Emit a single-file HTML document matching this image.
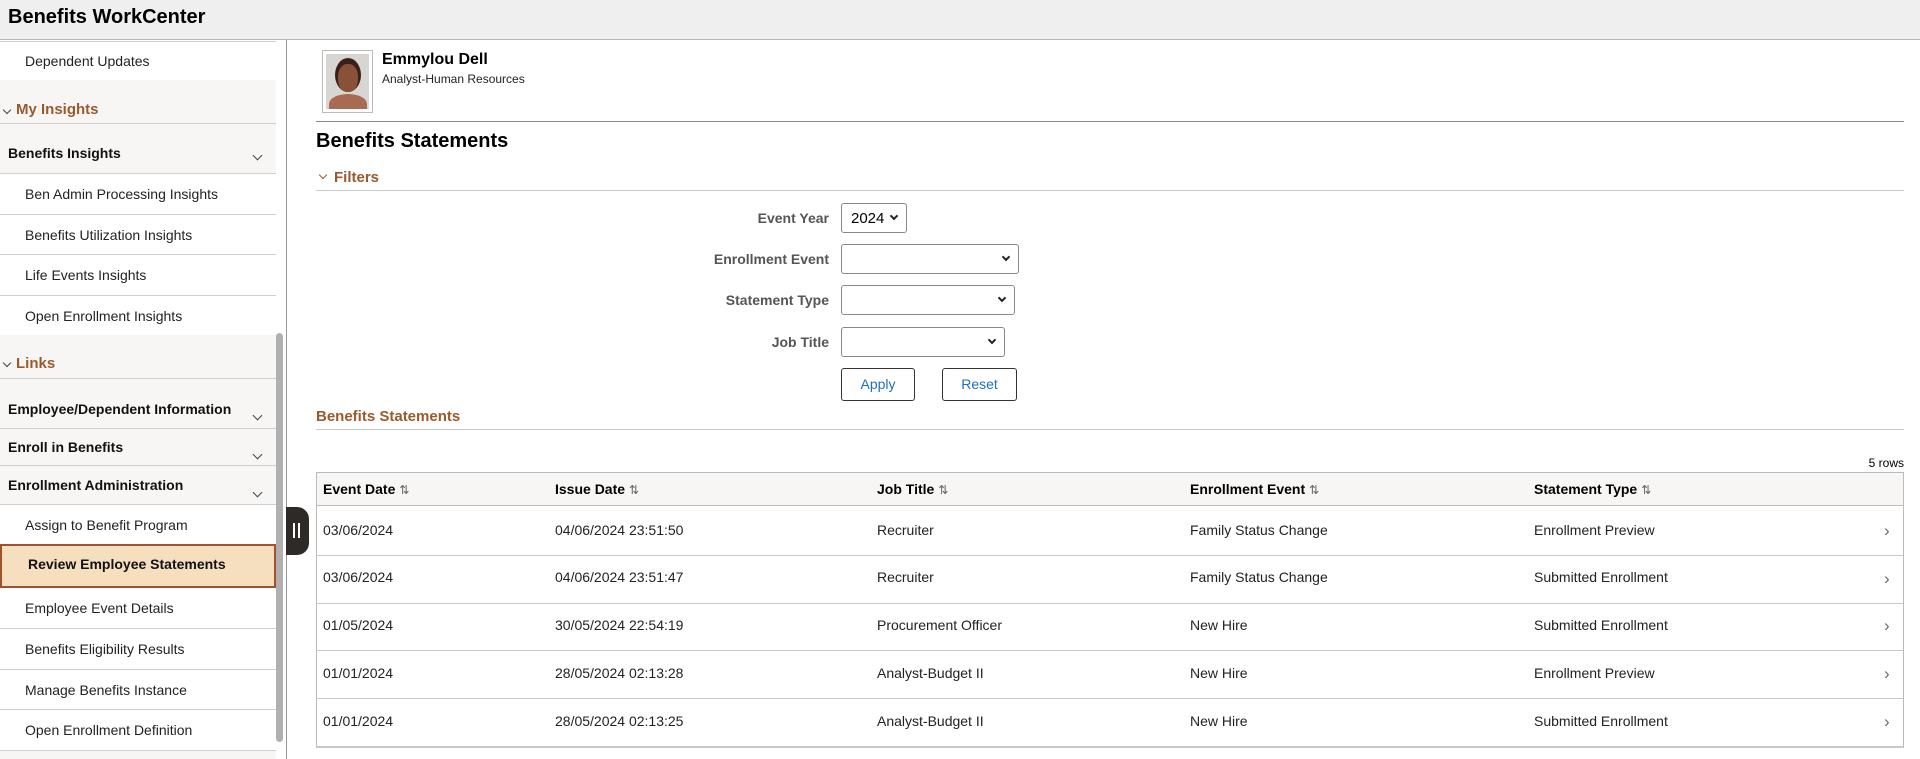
<!DOCTYPE html>
<html><head><meta charset="utf-8"><style>
*{box-sizing:border-box;margin:0;padding:0}
body{width:1920px;height:759px;overflow:hidden;background:#fff;font-family:"Liberation Sans",Arial,sans-serif;color:#000;position:relative}
.a{position:absolute}
.hdr{left:0;top:0;width:1920px;height:40px;background:#efefef;border-bottom:1px solid #b5b5b5}
.hdr span{position:absolute;left:8px;top:6px;font-size:20px;font-weight:bold;color:#000}
.nav{left:0;top:41px;width:276px;height:718px;background:#f7f6f5}
.row{position:absolute;left:0;width:276px;border-bottom:1px solid #cfcfcf;font-size:14px;display:flex;align-items:center}
.item{background:#fff;padding-left:25px;color:#222}
.grp{padding-left:8px;font-weight:bold;color:#111}
.sec{padding-left:16px;font-weight:bold;font-size:15px;color:#9a5a2e;border-bottom:1px solid #cfcfcf}
.chev{position:absolute;width:7px;height:7px;border-right:1.3px solid #444;border-bottom:1.3px solid #444;transform:rotate(45deg)}
.lbl{position:absolute;font-size:14px;font-weight:bold;color:#555;text-align:right;width:200px}
.sel{position:absolute;height:30px;border:1px solid #888;border-radius:3px;background:#fff;font-size:15px}
.sel i{position:absolute;right:9px;top:9px;width:6px;height:6px;border-right:2px solid #222;border-bottom:2px solid #222;transform:rotate(45deg)}
.btn{position:absolute;height:33px;border:1px solid #333;border-radius:3px;font-size:14px;color:#1f6fbf;text-align:center;line-height:31px}
.th{position:absolute;font-size:14px;font-weight:bold}
.td{position:absolute;font-size:14px;color:#222}
.hl{position:absolute;height:1px;background:#c8c8c8}
.srt{font-weight:normal;color:#666;font-size:12px;margin-left:4px}
</style></head><body>
<div class="a hdr"><span>Benefits WorkCenter</span></div>
<div class="a nav"></div>
<div class="a" style="left:286px;top:40px;width:1px;height:719px;background:#999"></div>
<div class="a" style="left:0;top:41px;width:276px;height:1px;background:#cfcfcf"></div>
<div class="row item" style="top:42px;height:38px;border-bottom:none">Dependent Updates</div>
<div class="row sec" style="top:80px;height:44px;padding-top:16px"><span class="chev" style="left:4px;top:27px;width:6px;height:6px"></span>My Insights</div>
<div class="row grp" style="top:124px;height:50px;padding-top:8px">Benefits Insights<span class="chev" style="left:254px;top:28px"></span></div>
<div class="row item" style="top:174px;height:41px;padding-top:0">Ben Admin Processing Insights</div>
<div class="row item" style="top:215px;height:40px">Benefits Utilization Insights</div>
<div class="row item" style="top:255px;height:41px">Life Events Insights</div>
<div class="row item" style="top:296px;height:39px;border-bottom:none">Open Enrollment Insights</div>
<div class="row sec" style="top:335px;height:44px;padding-top:14px"><span class="chev" style="left:4px;top:25px;width:6px;height:6px"></span>Links</div>
<div class="row grp" style="top:379px;height:50px;padding-top:10px">Employee/Dependent Information<span class="chev" style="left:254px;top:33px"></span></div>
<div class="row grp" style="top:429px;height:37px;padding-top:0">Enroll in Benefits<span class="chev" style="left:254px;top:22px"></span></div>
<div class="row grp" style="top:466px;height:39px">Enrollment Administration<span class="chev" style="left:254px;top:23px"></span></div>
<div class="row item" style="top:505px;height:39px;border-bottom:none">Assign to Benefit Program</div>
<div class="a" style="left:0;top:544px;width:276px;height:44px;background:#f5dfbf;border:2px solid #a0522d;font-size:14px;font-weight:bold;padding:10px 0 0 26px;color:#111">Review Employee Statements</div>
<div class="row item" style="top:588px;height:41px">Employee Event Details</div>
<div class="row item" style="top:629px;height:41px">Benefits Eligibility Results</div>
<div class="row item" style="top:670px;height:40px">Manage Benefits Instance</div>
<div class="row item" style="top:710px;height:41px">Open Enrollment Definition</div>
<div class="a" style="left:276px;top:333px;width:7px;height:409px;background:#b0b0b0;border-radius:4px"></div>
<div class="a" style="left:286px;top:507px;width:23px;height:48px;background:#2e2a27;border-radius:0 12px 12px 0"></div>
<div class="a" style="left:293px;top:523px;width:2px;height:15px;background:#fff"></div>
<div class="a" style="left:298px;top:523px;width:2px;height:15px;background:#fff"></div>

<div class="a" style="left:322px;top:50px;width:51px;height:63px;border:1px solid #bbb;background:#fff;padding:2px">
<div class="a" style="left:3px;top:3px;width:43px;height:55px;background:#d8d6d2;overflow:hidden">
<div class="a" style="left:9px;top:4px;width:26px;height:34px;background:#3a2018;border-radius:50%"></div>
<div class="a" style="left:12px;top:10px;width:20px;height:28px;background:#8a5038;border-radius:45%"></div>
<div class="a" style="left:3px;top:40px;width:38px;height:20px;background:#a86a50;border-radius:50% 50% 0 0"></div>
</div></div>
<div class="a" style="left:382px;top:51px;font-size:16px;font-weight:bold">Emmylou Dell</div>
<div class="a" style="left:382px;top:72px;font-size:12px;color:#222">Analyst-Human Resources</div>
<div class="a" style="left:316px;top:121px;width:1588px;height:1px;background:#888"></div>
<div class="a" style="left:316px;top:130px;font-size:20px;font-weight:bold">Benefits Statements</div>
<span class="chev" style="left:320px;top:172px;width:6px;height:6px;position:absolute;border-color:#9a5a2e"></span>
<div class="a" style="left:334px;top:169px;font-size:15px;font-weight:bold;color:#9a5a2e">Filters</div>
<div class="a" style="left:316px;top:190px;width:1588px;height:1px;background:#c8c8c8"></div>

<div class="lbl" style="left:629px;top:210px">Event Year</div>
<div class="sel" style="left:841px;top:203px;width:66px"><span style="position:absolute;left:9px;top:6px">2024</span><i></i></div>
<div class="lbl" style="left:629px;top:251px">Enrollment Event</div>
<div class="sel" style="left:841px;top:244px;width:178px"><i></i></div>
<div class="lbl" style="left:629px;top:292px">Statement Type</div>
<div class="sel" style="left:841px;top:285px;width:174px"><i></i></div>
<div class="lbl" style="left:629px;top:334px">Job Title</div>
<div class="sel" style="left:841px;top:327px;width:164px"><i></i></div>
<div class="btn" style="left:841px;top:368px;width:74px">Apply</div>
<div class="btn" style="left:942px;top:368px;width:75px">Reset</div>

<div class="a" style="left:316px;top:408px;font-size:15px;font-weight:bold;color:#9a5a2e">Benefits Statements</div>
<div class="a" style="left:316px;top:429px;width:1588px;height:1px;background:#c8c8c8"></div>
<div class="a" style="left:1850px;top:456px;font-size:12px;width:54px;text-align:right">5 rows</div>

<div class="a" style="left:316px;top:472px;width:1588px;height:276px;border:1px solid #bbb;border-bottom:2px solid #c8c8c8"></div>
<div class="a" style="left:317px;top:473px;width:1586px;height:33px;background:#f7f6f5;border-bottom:1px solid #bbb"></div>
<div class="th" style="left:323px;top:481px">Event Date<span class="srt">⇅</span></div>
<div class="th" style="left:555px;top:481px">Issue Date<span class="srt">⇅</span></div>
<div class="th" style="left:877px;top:481px">Job Title<span class="srt">⇅</span></div>
<div class="th" style="left:1190px;top:481px">Enrollment Event<span class="srt">⇅</span></div>
<div class="th" style="left:1534px;top:481px">Statement Type<span class="srt">⇅</span></div>

<div class="hl" style="left:317px;top:555px;width:1586px"></div>
<div class="hl" style="left:317px;top:603px;width:1586px"></div>
<div class="hl" style="left:317px;top:650px;width:1586px"></div>
<div class="hl" style="left:317px;top:698px;width:1586px"></div>

<div class="td" style="left:323px;top:522px">03/06/2024</div><div class="td" style="left:555px;top:522px">04/06/2024 23:51:50</div><div class="td" style="left:877px;top:522px">Recruiter</div><div class="td" style="left:1190px;top:522px">Family Status Change</div><div class="td" style="left:1534px;top:522px">Enrollment Preview</div>
<div class="td" style="left:323px;top:569px">03/06/2024</div><div class="td" style="left:555px;top:569px">04/06/2024 23:51:47</div><div class="td" style="left:877px;top:569px">Recruiter</div><div class="td" style="left:1190px;top:569px">Family Status Change</div><div class="td" style="left:1534px;top:569px">Submitted Enrollment</div>
<div class="td" style="left:323px;top:617px">01/05/2024</div><div class="td" style="left:555px;top:617px">30/05/2024 22:54:19</div><div class="td" style="left:877px;top:617px">Procurement Officer</div><div class="td" style="left:1190px;top:617px">New Hire</div><div class="td" style="left:1534px;top:617px">Submitted Enrollment</div>
<div class="td" style="left:323px;top:665px">01/01/2024</div><div class="td" style="left:555px;top:665px">28/05/2024 02:13:28</div><div class="td" style="left:877px;top:665px">Analyst-Budget II</div><div class="td" style="left:1190px;top:665px">New Hire</div><div class="td" style="left:1534px;top:665px">Enrollment Preview</div>
<div class="td" style="left:323px;top:713px">01/01/2024</div><div class="td" style="left:555px;top:713px">28/05/2024 02:13:25</div><div class="td" style="left:877px;top:713px">Analyst-Budget II</div><div class="td" style="left:1190px;top:713px">New Hire</div><div class="td" style="left:1534px;top:713px">Submitted Enrollment</div>

<div class="td" style="left:1884px;top:521px;font-size:17px;color:#666">›</div>
<div class="td" style="left:1884px;top:569px;font-size:17px;color:#666">›</div>
<div class="td" style="left:1884px;top:616px;font-size:17px;color:#666">›</div>
<div class="td" style="left:1884px;top:664px;font-size:17px;color:#666">›</div>
<div class="td" style="left:1884px;top:712px;font-size:17px;color:#666">›</div>
</body></html>
